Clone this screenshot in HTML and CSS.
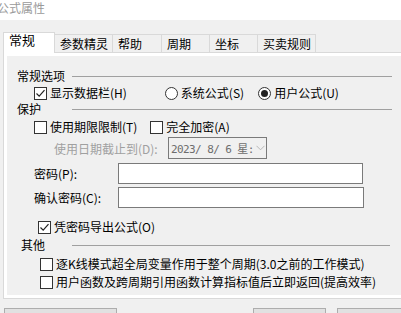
FILE: index.html
```html
<!DOCTYPE html>
<html>
<head>
<meta charset="utf-8">
<link rel="stylesheet" href="styles.css">
</head>
<body>
<div class="window">
  <div class="titlebar"><span class="title">公式属性</span></div>
  <div class="tabs">
    <div class="tab tab-active w51">常规</div>
    <div class="tab w58">参数精灵</div>
    <div class="tab w49">帮助</div>
    <div class="tab w48">周期</div>
    <div class="tab w48">坐标</div>
    <div class="tab w58">买卖规则</div>
  </div>
  <div class="panel">
    <div class="page">
      <div class="group-head"><span class="group-label">常规选项</span><span class="group-line"></span></div>
      <div class="row row-opts">
        <label class="check"><span class="box"><svg viewBox="0 0 13 13" width="13" height="13"><path d="M2.5 6.5 L5.2 9.2 L10.5 3.2" fill="none" stroke="#222" stroke-width="1.2"/></svg></span>显示数据栏(H)</label>
        <label class="radio r1"><span class="circle"></span>系统公式(S)</label>
        <label class="radio r2"><span class="circle on"><span class="dot"></span></span>用户公式(U)</label>
      </div>
      <div class="group-head gh2"><span class="group-label">保护</span><span class="group-line"></span></div>
      <div class="row row-protect">
        <label class="check"><span class="box"></span>使用期限限制(T)</label>
        <label class="check c2"><span class="box"></span>完全加密(A)</label>
      </div>
      <div class="row row-date">
        <span class="disabled-label">使用日期截止到(D):</span>
        <div class="datebox"><span class="date-text">2023/ 8/ 6 星:</span><svg class="chev" viewBox="0 0 9 6" width="9" height="6"><path d="M0.5 0.8 L4.5 4.8 L8.5 0.8" fill="none" stroke="#b8b8b8" stroke-width="1"/></svg></div>
      </div>
      <div class="row row-field">
        <span class="field-label">密码(P):</span>
        <div class="input"></div>
      </div>
      <div class="row row-field f2">
        <span class="field-label">确认密码(C):</span>
        <div class="input wide"></div>
      </div>
      <div class="row row-export">
        <label class="check"><span class="box"><svg viewBox="0 0 13 13" width="13" height="13"><path d="M2.5 6.5 L5.2 9.2 L10.5 3.2" fill="none" stroke="#222" stroke-width="1.2"/></svg></span>凭密码导出公式(O)</label>
      </div>
      <div class="group-head gh3"><span class="group-label">其他</span><span class="group-line short"></span></div>
      <div class="row row-other">
        <label class="check"><span class="box"></span>逐K线模式超全局变量作用于整个周期(3.0之前的工作模式)</label>
      </div>
      <div class="row row-other o2">
        <label class="check"><span class="box"></span>用户函数及跨周期引用函数计算指标值后立即返回(提高效率)</label>
      </div>
    </div>
  </div>
  <div class="buttons">
    <div class="btn b-default">设为默认设置(D)</div>
    <div class="btn b-ok">确定</div>
    <div class="btn b-cancel">取消</div>
  </div>
</div>
</body>
</html>
```
FILE: styles.css
```css
html, body {
  margin: 0;
  padding: 0;
}
body {
  width: 401px;
  height: 313px;
  overflow: hidden;
  background: #f0f0f0;
  font-family: "Noto Sans CJK SC", "Noto Sans", sans-serif;
  font-size: 12px;
  color: #000;
}
.window {
  width: 420px;
}
.titlebar {
  height: 20px;
  background: #fff;
  position: relative;
}
.title {
  display: block;
  margin-left: -3px;
  line-height: 16px;
  color: #9a9a9a;
  font-size: 12px;
}
.tabs {
  display: flex;
  align-items: flex-end;
  height: 21px;
  margin-top: 11px;
  padding-left: 3px;
  position: relative;
  z-index: 2;
}
.tab {
  box-sizing: border-box;
  height: 18px;
  line-height: 17px;
  padding-left: 5px;
  border: 1px solid #d9d9d9;
  border-bottom: none;
  background: #f0f0f0;
  margin-right: -1px;
  white-space: nowrap;
}
.tab-active {
  height: 21px;
  line-height: 14px;
  padding-left: 5px;
  font-size: 13px;
  background: #fff;
  margin-bottom: -1px;
  position: relative;
  z-index: 3;
}
.w51 { width: 52px; }
.w58 { width: 59px; }
.w49 { width: 50px; }
.w48 { width: 49px; }
.panel {
  box-sizing: border-box;
  margin-left: 3px;
  width: 415px;
  height: 247px;
  border: 1px solid #d9d9d9;
  background: #fff;
  padding: 3px;
}
.page {
  box-sizing: border-box;
  height: 239px;
  background: #f0f0f0;
  padding-top: 12px;
}
.group-head {
  display: flex;
  align-items: center;
  height: 16px;
}
.group-label {
  width: 55px;
  margin-left: 10px;
  line-height: 16px;
  white-space: nowrap;
}
.group-line {
  width: 320px;
  border-top: 1px solid #a0a0a0;
  margin-top: 1px;
}
.group-line.short {
  width: 318px;
}
.gh3 .group-label {
  margin-left: 14px;
  width: 51px;
}
.row {
  display: flex;
  align-items: center;
  white-space: nowrap;
}
.check, .radio {
  display: flex;
  align-items: center;
  line-height: 16px;
}
.box {
  box-sizing: border-box;
  width: 13px;
  height: 13px;
  border: 1px solid #333;
  background: #fff;
  margin-right: 3px;
  position: relative;
}
.box svg {
  position: absolute;
  left: -1px;
  top: -1px;
}
.circle {
  box-sizing: border-box;
  width: 13px;
  height: 13px;
  border: 1px solid #333;
  border-radius: 50%;
  background: #fff;
  margin-right: 3px;
  display: flex;
  align-items: center;
  justify-content: center;
}
.dot {
  width: 7px;
  height: 7px;
  border-radius: 50%;
  background: #222;
}
.row-opts {
  height: 16px;
  margin-top: 1px;
  padding-left: 27px;
}
.r1 { margin-left: 38px; }
.r2 { margin-left: 14px; }
.gh2 { margin-top: 0; }
.row-protect {
  height: 16px;
  margin-top: 2px;
  padding-left: 27px;
}
.c2 { margin-left: 13px; }
.row-date {
  height: 22px;
  margin-top: 2px;
  padding-left: 47px;
}
.disabled-label {
  color: #a0a0a0;
  width: 114px;
}
.datebox {
  box-sizing: border-box;
  width: 99px;
  height: 22px;
  border: 1px solid #7a7a7a;
  background: #f0f0f0;
  display: flex;
  align-items: center;
  padding-left: 2px;
  color: #6d6d6d;
}
.date-text {
  font-family: "DejaVu Sans Mono", "Noto Sans CJK SC", monospace;
  font-size: 11px;
  letter-spacing: -0.6px;
  width: 84px;
  white-space: nowrap;
}
.chev {
  margin-left: 1px;
}
.row-field {
  height: 21px;
  margin-top: 4px;
  padding-left: 27px;
}
.f2 { margin-top: 3px; }
.field-label {
  width: 84px;
}
.input {
  box-sizing: border-box;
  width: 245px;
  height: 21px;
  border: 1px solid #7a7a7a;
  background: #fff;
}
.input.wide { width: 246px; }
.row-export {
  height: 16px;
  margin-top: 11px;
  padding-left: 31px;
}
.gh3 { margin-top: 2px; }
.row-other {
  height: 16px;
  margin-top: 3px;
  padding-left: 33px;
}
.o2 { margin-top: 2px; }
.buttons {
  display: flex;
  margin-top: 9px;
  padding-left: 4px;
}
.btn {
  box-sizing: border-box;
  height: 23px;
  border: 1px solid #adadad;
  background: #e1e1e1;
  text-align: center;
  line-height: 21px;
  white-space: nowrap;
}
.b-default { width: 113px; }
.b-ok { width: 73px; margin-left: 136px; }
.b-cancel { width: 73px; margin-left: 11px; }
```
